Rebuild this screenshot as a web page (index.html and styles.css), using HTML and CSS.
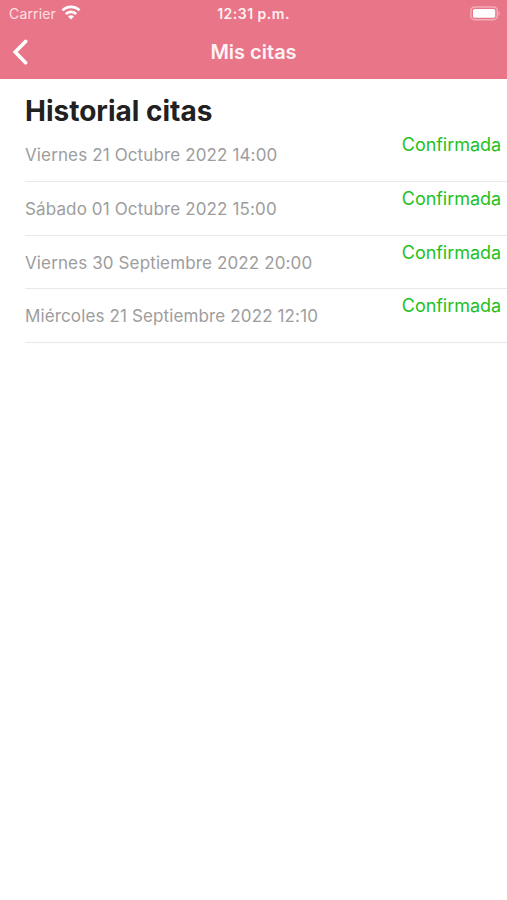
FILE: index.html
```html
<!DOCTYPE html>
<html lang="es">
<head>
    <meta charset="UTF-8">
    <meta name="viewport" content="width=device-width, initial-scale=1.0">
    <title>Mis citas</title>
    <link rel="stylesheet" href="styles.css">
</head>
<body>
    <header class="header">
        <div class="status-bar">
            <div class="carrier">
                <span class="carrier-name">Carrier</span>
                <svg class="wifi" width="20" height="15" viewBox="0 0 20 15" fill="none" stroke="#fff" stroke-width="2.7">
                    <path d="M1.5 5.4a12 12 0 0 1 17 0"/>
                    <path d="M4.8 9a7.4 7.4 0 0 1 10.4 0"/>
                    <path d="M10 14.6l-3-3a4.2 4.2 0 0 1 6 0z" fill="#fff" stroke="none"/>
                </svg>
            </div>
            <span class="time">12:31 p.m.</span>
            <svg class="battery" width="31" height="15" viewBox="0 0 31 15">
                <rect x="0.9" y="0.9" width="26.4" height="12.8" rx="3.8" fill="none" stroke="#fff" stroke-opacity="0.4" stroke-width="1.5"/>
                <rect x="3" y="2.9" width="22.2" height="8.8" rx="1.5" fill="#fff"/>
                <path d="M28.6 4.9q2.2 2.4 0 4.8z" fill="#fff" fill-opacity="0.55"/>
            </svg>
        </div>
        <nav class="nav-bar">
            <a href="#" class="back" aria-label="Volver">
                <svg width="16" height="27" viewBox="0 0 16 27" fill="none" stroke="#fff" stroke-width="3.6" stroke-linecap="round" stroke-linejoin="miter">
                    <path d="M13.6 2.4L3.2 13.1l10.4 10.7"/>
                </svg>
            </a>
            <h1 class="nav-title">Mis citas</h1>
        </nav>
    </header>

    <main class="content">
        <h2 class="list-title">Historial citas</h2>
        <ul class="citas">
            <li class="cita">
                <span class="fecha">Viernes 21 Octubre 2022 14:00</span>
                <span class="estado">Confirmada</span>
            </li>
            <li class="cita">
                <span class="fecha">Sábado 01 Octubre 2022 15:00</span>
                <span class="estado">Confirmada</span>
            </li>
            <li class="cita">
                <span class="fecha">Viernes 30 Septiembre 2022 20:00</span>
                <span class="estado">Confirmada</span>
            </li>
            <li class="cita">
                <span class="fecha">Miércoles 21 Septiembre 2022 12:10</span>
                <span class="estado">Confirmada</span>
            </li>
        </ul>
    </main>
</body>
</html>
```
FILE: styles.css
```css
:root {
    --pink: #e97588;
    --green: #1fc11f;
    --gray: #9d9d9d;
    --line: #e8e8e8;
}

html, body {
    margin: 0;
    padding: 0;
    font-family: Inter, "Liberation Sans", sans-serif;
    background-color: #fff;
}

/* ============
    Header
    =========== */
.header {
    height: 79px;
    background-color: var(--pink);
    color: #fff;
}

.status-bar {
    display: grid;
    grid-template-columns: 1fr auto 1fr;
    align-items: center;
    height: 27px;
    padding: 0 6px 0 9px;
    font-size: 14px;
}

.carrier {
    display: flex;
    align-items: center;
    gap: 5px;
}

.carrier-name {
    letter-spacing: 0.15px;
    color: #fde0e4;
}

.wifi {
    margin-bottom: 2px;
}

.time {
    margin-right: 3px;
    font-weight: 600;
    letter-spacing: 0.5px;
    color: #fff0f2;
}

.battery {
    justify-self: end;
}

.nav-bar {
    display: grid;
    grid-template-columns: 1fr auto 1fr;
    align-items: center;
    height: 50px;
    padding: 0 12px;
}

.back {
    display: flex;
}

.nav-title {
    margin: 0;
    font-size: 20px;
    font-weight: 600;
    color: #fff3f4;
}

/* ============
    Citas
    =========== */
.content {
    padding: 14px 0 0 25px;
}

.list-title {
    margin: 0;
    height: 35px;
    line-height: 36px;
    font-size: 28px;
    font-weight: 700;
    color: #212121;
}

.citas {
    margin: 0;
    padding: 0;
    list-style: none;
}

.cita {
    display: flex;
    justify-content: space-between;
    box-sizing: border-box;
    height: 53.75px;
    padding-right: 6px;
    border-bottom: 1px solid var(--line);
    white-space: nowrap;
}

.fecha {
    line-height: 54px;
    font-size: 17px;
    letter-spacing: 0.13px;
    color: var(--gray);
}

.estado {
    line-height: 34px;
    font-size: 18px;
    letter-spacing: -0.05px;
    color: var(--green);
}
```
